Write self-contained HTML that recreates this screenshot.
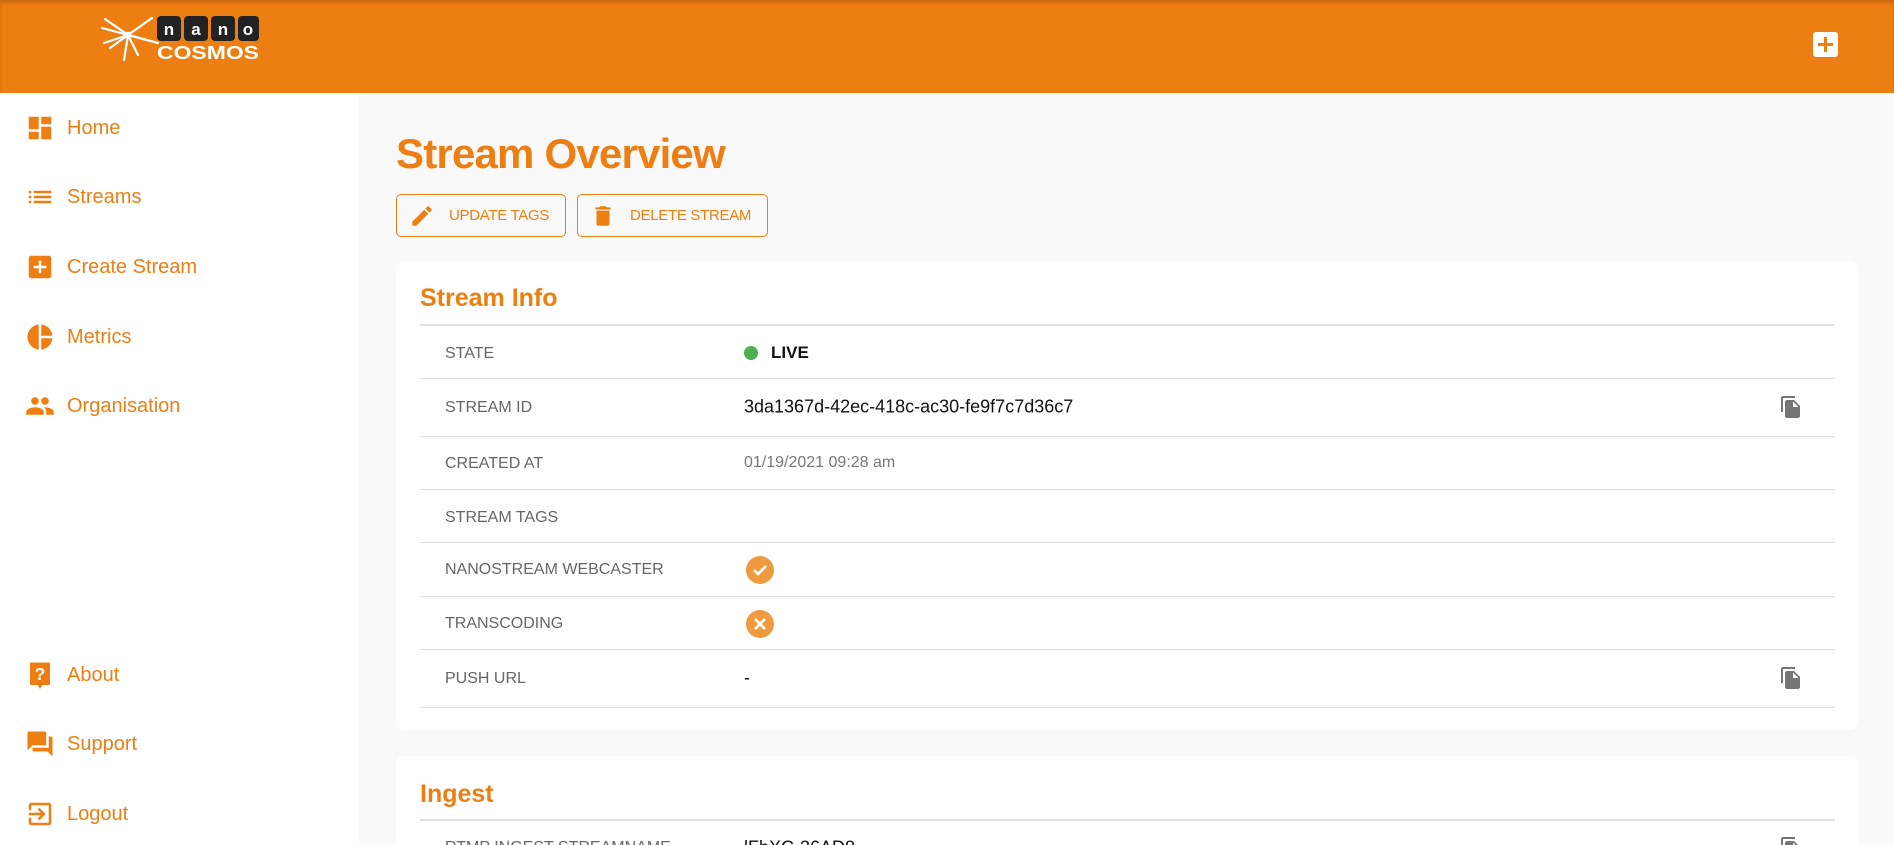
<!DOCTYPE html>
<html style="overflow:hidden;width:1894px;height:845px"><head><meta charset="utf-8"><style>
*{box-sizing:border-box;margin:0;padding:0}
body{width:1894px;height:845px;overflow:hidden;background:#f9f9f9;font-family:"Liberation Sans",sans-serif;position:relative}
.hdr{position:absolute;left:0;top:0;width:1894px;height:93px;background:#ed7e11;box-shadow:inset 0 3px 3px rgba(0,0,0,.15)}
.side{position:absolute;left:0;top:93px;width:359px;height:752px;background:#fff}
.nav{position:absolute;left:25px;display:flex;align-items:center;color:#ed7e11;font-size:20px}
.nav svg{width:30px;height:30px;margin-right:12px}
.abs{position:absolute}
h1{position:absolute;left:396px;top:130px;font-size:42px;font-weight:bold;color:#ed7e11;letter-spacing:-0.8px}
.btn{position:absolute;top:194px;height:43px;border:1px solid #ed7e11;border-radius:5px;color:#ed7e11;font-size:15px;display:flex;align-items:center;padding-left:12px;letter-spacing:-0.3px}
.btn svg{width:26px;height:26px;margin-right:14px}
.card{position:absolute;left:396px;width:1462px;background:#fff;border-radius:8px;overflow:hidden}
.ct{position:absolute;left:24px;font-size:25px;font-weight:bold;color:#ed7e11}
.line{position:absolute;left:24px;width:1415px;height:2px;background:#e0e0e0}
.rl{position:absolute;left:24px;width:1415px;height:1px;background:#e0e0e0}
.lab{position:absolute;left:49px;font-size:16px;color:#666;transform:translateY(-50%)}
.val{position:absolute;left:348px;font-size:18px;color:#111;transform:translateY(-50%)}
.cp{position:absolute;left:1383px;width:24px;height:24px;transform:translateY(-50%)}
</style></head><body>
<div class="hdr">
 <svg class="abs" style="left:100px;top:15px" width="160" height="50" viewBox="0 0 160 50">
  <g stroke="#fff" stroke-width="2.2" fill="none" stroke-linecap="round">
   <path d="M5 4 L28 20 M2 13 L28 20 M4 28 L28 20 M10 33 L28 20 M24 45 L28 20 M38 40 L28 20 M52 3 L28 20 M28 20 L58 28"/>
  </g>
  <circle cx="28" cy="20" r="3.5" fill="#fff"/>
  <g fill="#222"><rect x="57" y="1" width="24" height="25" rx="4"/><rect x="84" y="1" width="24" height="25" rx="4"/><rect x="111" y="1" width="24" height="25" rx="4"/><rect x="138" y="1" width="21" height="25" rx="4"/></g>
  <g fill="#fff" font-family="Liberation Sans" font-weight="bold" font-size="17" text-anchor="middle"><text x="69" y="20">n</text><text x="96" y="20">a</text><text x="123" y="20">n</text><text x="148" y="20">o</text></g>
  <text x="57" y="44" fill="#fff" font-family="Liberation Sans" font-weight="bold" font-size="18" textLength="102" lengthAdjust="spacingAndGlyphs">COSMOS</text>
 </svg>
 <div class="abs" style="left:1813px;top:32px;width:25px;height:25px;background:#fff;border-radius:3px"><div class="abs" style="left:5px;top:11px;width:15px;height:3px;background:#ed7e11"></div><div class="abs" style="left:11px;top:5px;width:3px;height:15px;background:#ed7e11"></div></div>
</div>
<div class="side">
 <div class="nav" style="top:20px"><svg viewBox="0 0 24 24"><path fill="#ed7e11" d="M3 13h8V3H3v10zm0 8h8v-6H3v6zm10 0h8V11h-8v10zm0-18v6h8V3h-8z"/></svg>Home</div>
 <div class="nav" style="top:89px"><svg viewBox="0 0 24 24"><path fill="#ed7e11" d="M3 13h2v-2H3v2zm0 4h2v-2H3v2zm0-8h2V7H3v2zm4 4h14v-2H7v2zm0 4h14v-2H7v2zM7 7v2h14V7H7z"/></svg>Streams</div>
 <div class="nav" style="top:159px"><svg viewBox="0 0 24 24"><path fill="#ed7e11" d="M19 3H5a2 2 0 0 0-2 2v14a2 2 0 0 0 2 2h14a2 2 0 0 0 2-2V5a2 2 0 0 0-2-2zm-2 10h-4v4h-2v-4H7v-2h4V7h2v4h4v2z"/></svg>Create Stream</div>
 <div class="nav" style="top:229px"><svg viewBox="0 0 24 24"><path fill="#ed7e11" d="M11 2v20c-5.07-.5-9-4.79-9-10s3.93-9.5 9-10zm2.03 0v8.99H22c-.47-4.74-4.24-8.52-8.97-8.99zm0 11.01V22c4.74-.47 8.5-4.25 8.97-8.99h-8.97z"/></svg>Metrics</div>
 <div class="nav" style="top:298px"><svg viewBox="0 0 24 24"><path fill="#ed7e11" d="M16 11c1.66 0 2.99-1.34 2.99-3S17.66 5 16 5s-3 1.34-3 3 1.34 3 3 3zm-8 0c1.66 0 2.99-1.34 2.99-3S9.66 5 8 5 5 6.34 5 8s1.34 3 3 3zm0 2c-2.33 0-7 1.17-7 3.5V19h14v-2.5c0-2.33-4.67-3.5-7-3.5zm8 0c-.29 0-.62.02-.97.05 1.16.84 1.97 1.970 1.97 3.45V19h6v-2.5c0-2.33-4.67-3.5-7-3.5z"/></svg>Organisation</div>
 <div class="nav" style="top:567px"><svg viewBox="0 0 24 24"><path fill="#ed7e11" d="M5 2h14a1 1 0 0 1 1 1v16a1 1 0 0 1-1 1h-5l-2 3-2-3H5a1 1 0 0 1-1-1V3a1 1 0 0 1 1-1z"/><text x="12" y="16" fill="#fff" font-size="14" font-weight="bold" text-anchor="middle" font-family="Liberation Sans">?</text></svg>About</div>
 <div class="nav" style="top:636px"><svg viewBox="0 0 24 24"><path fill="#ed7e11" d="M21 6h-2v9H6v2c0 .55.45 1 1 1h11l4 4V7c0-.55-.45-1-1-1zm-4 6V3c0-.55-.45-1-1-1H3c-.55 0-1 .45-1 1v14l4-4h10c.55 0 1-.45 1-1z"/></svg>Support</div>
 <div class="nav" style="top:706px"><svg viewBox="0 0 24 24"><path fill="#ed7e11" d="M10.09 15.59L11.5 17l5-5-5-5-1.41 1.41L12.67 11H3v2h9.67l-2.58 2.59zM19 3H5a2 2 0 0 0-2 2v4h2V5h14v14H5v-4H3v4a2 2 0 0 0 2 2h14c1.1 0 2-.9 2-2V5c0-1.1-.9-2-2-2z"/></svg>Logout</div>
</div>
<h1>Stream Overview</h1>
<div class="btn" style="left:396px;width:170px"><svg viewBox="0 0 24 24"><path fill="#ed7e11" d="M3 17.25V21h3.75L17.81 9.94l-3.75-3.75L3 17.25zM20.71 7.04a1 1 0 0 0 0-1.41l-2.34-2.34a1 1 0 0 0-1.41 0l-1.83 1.83 3.75 3.75 1.83-1.83z"/></svg>UPDATE TAGS</div>
<div class="btn" style="left:577px;width:191px"><svg viewBox="0 0 24 24"><path fill="#ed7e11" d="M6 19c0 1.1.9 2 2 2h8c1.1 0 2-.9 2-2V7H6v12zM19 4h-3.5l-1-1h-5l-1 1H5v2h14V4z"/></svg>DELETE STREAM</div>

<div class="card" style="top:261px;height:469px">
 <div class="ct" style="top:23px">Stream Info</div>
 <div class="line" style="top:63px"></div>
 <div class="lab" style="top:93px">STATE</div>
 <div class="val" style="top:92px;display:flex;align-items:center;font-weight:bold;font-size:17px"><span style="width:14px;height:14px;border-radius:50%;background:#4caf50;margin-right:13px;display:inline-block"></span>LIVE</div>
 <div class="rl" style="top:117px"></div>
 <div class="lab" style="top:147px">STREAM ID</div>
 <div class="val" style="top:146px">3da1367d-42ec-418c-ac30-fe9f7c7d36c7</div>
 <svg class="cp" style="top:146px" viewBox="0 0 24 24"><path fill="#757575" d="M16 1H4c-1.1 0-2 .9-2 2v14h2V3h12V1zm-1 4l6 6v10c0 1.1-.9 2-2 2H7.99C6.89 23 6 22.1 6 21l.01-14c0-1.1.89-2 1.99-2h7zm-1 7h5.5L14 6.5V12z"/></svg>
 <div class="rl" style="top:175px"></div>
 <div class="lab" style="top:203px">CREATED AT</div>
 <div class="val" style="top:202px;color:#777;font-size:16px">01/19/2021 09:28 am</div>
 <div class="rl" style="top:228px"></div>
 <div class="lab" style="top:257px">STREAM TAGS</div>
 <div class="rl" style="top:281px"></div>
 <div class="lab" style="top:309px">NANOSTREAM WEBCASTER</div>
 <svg class="abs" style="left:350px;top:295px" width="28" height="28" viewBox="0 0 28 28"><circle cx="14" cy="14" r="14" fill="#f09a40"/><path d="M8 14l4 4 8-8" stroke="#fff" stroke-width="2.6" fill="none"/></svg>
 <div class="rl" style="top:335px"></div>
 <div class="lab" style="top:363px">TRANSCODING</div>
 <svg class="abs" style="left:350px;top:349px" width="28" height="28" viewBox="0 0 28 28"><circle cx="14" cy="14" r="14" fill="#f09a40"/><path d="M9 9l10 10M19 9L9 19" stroke="#fff" stroke-width="2.6"/></svg>
 <div class="rl" style="top:388px"></div>
 <div class="lab" style="top:418px">PUSH URL</div>
 <div class="val" style="top:417px">-</div>
 <svg class="cp" style="top:417px" viewBox="0 0 24 24"><path fill="#757575" d="M16 1H4c-1.1 0-2 .9-2 2v14h2V3h12V1zm-1 4l6 6v10c0 1.1-.9 2-2 2H7.99C6.89 23 6 22.1 6 21l.01-14c0-1.1.89-2 1.99-2h7zm-1 7h5.5L14 6.5V12z"/></svg>
 <div class="rl" style="top:446px"></div>
</div>
<div class="card" style="top:756px;height:89px;border-radius:8px 8px 0 0">
 <div class="ct" style="top:24px">Ingest</div>
 <div class="line" style="top:63px"></div>
 <div class="lab" style="top:92px">RTMP INGEST STREAMNAME</div>
 <div class="val" style="top:92px">lFbXC-36AD8</div>
 <svg class="cp" style="top:92px" viewBox="0 0 24 24"><path fill="#757575" d="M16 1H4c-1.1 0-2 .9-2 2v14h2V3h12V1zm-1 4l6 6v10c0 1.1-.9 2-2 2H7.99C6.89 23 6 22.1 6 21l.01-14c0-1.1.89-2 1.99-2h7zm-1 7h5.5L14 6.5V12z"/></svg>
</div>
</body></html>
